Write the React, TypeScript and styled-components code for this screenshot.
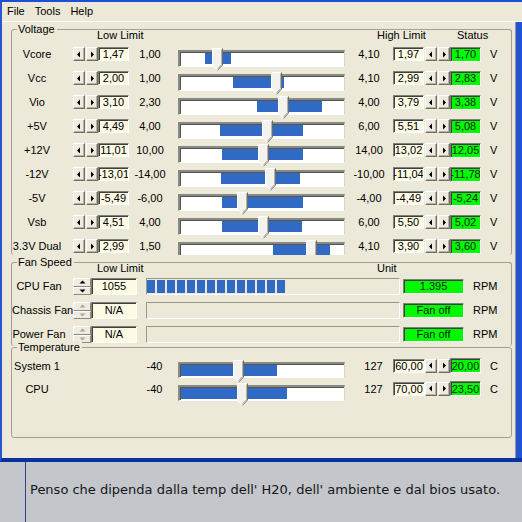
import React from 'react';
import styled, { createGlobalStyle } from 'styled-components';

const GlobalStyle = createGlobalStyle`
  html, body { margin: 0; padding: 0; }
  body {
    background: #C3C6CA;
    font-family: "Liberation Sans", Arial, sans-serif;
    font-size: 11px;
    color: #000;
    overflow: hidden;
  }
`;

const Page = styled.div`
  width: 522px;
  height: 522px;
  display: flex;
  flex-direction: column;
  background: #C3C6CA;
  overflow: hidden;
`;

const Window = styled.div`
  height: 462px;
  box-sizing: border-box;
  background: #ECE9D8;
  border-top: 2px solid #1A4FD6;
  border-left: 2px solid #2656D2;
  border-bottom: 4px solid #0B31A0;
  display: flex;
  flex-direction: column;
`;

const MenuBar = styled.div`
  height: 19px;
  display: flex;
  align-items: center;
  border-bottom: 1px solid #fff;
  font-size: 11px;
`;

const MenuItem = styled.span`
  padding: 0 5px;
  line-height: 19px;
`;

const Client = styled.div`
  flex: 1;
  min-height: 0;
  display: flex;
  flex-direction: column;
  padding: 0 4px 0 9px;
  border-right: 6px solid #2152D0;
  box-shadow: inset -1px 0 0 #8C97B8;
`;

const GroupBox = styled.div<{ $top: number; $open?: boolean; $pt?: number; $pb?: number }>`
  position: relative;
  margin-top: ${p => p.$top}px;
  border: 1px solid #A3A091;
  border-bottom: ${p => (p.$open ? 'none' : '1px solid #A3A091')};
  border-radius: 3px;
  padding-top: ${p => p.$pt ?? 0}px;
  padding-bottom: ${p => p.$pb ?? 0}px;
`;

const Caption = styled.span`
  position: absolute;
  top: -7px;
  left: 5px;
  padding: 0 2px 0 1px;
  background: #ECE9D8;
  line-height: 13px;
`;

const HeaderRow = styled.div<{ $h: number }>`
  display: grid;
  grid-template-columns: 85px 280px 80px 1fr;
  height: ${p => p.$h}px;
  line-height: ${p => p.$h}px;
  align-items: center;
  white-space: nowrap;
`;

const HeaderText = styled.span<{ $col: number }>`
  grid-column: ${p => p.$col};
`;

const RowsClip = styled.div<{ $h: number }>`
  height: ${p => p.$h}px;
  overflow: hidden;
`;

const Row = styled.div<{ $h: number }>`
  display: grid;
  grid-template-columns: 50px 11px 25px 31px 42px 7px 167px 48px 31px 1px 25px 31px 9px 1fr;
  height: ${p => p.$h}px;
  align-items: center;
`;

const Label = styled.span<{ $col?: string }>`
  grid-column: ${p => p.$col ?? '1'};
  text-align: center;
  white-space: nowrap;
`;

const Num = styled.span<{ $col: number; $nudge?: number }>`
  grid-column: ${p => p.$col};
  text-align: center;
  padding-left: ${p => p.$nudge ?? 0}px;
  white-space: nowrap;
`;

const Unit = styled.span<{ $col: number }>`
  grid-column: ${p => p.$col};
`;

const SpinPair = styled.div<{ $col: number }>`
  grid-column: ${p => p.$col};
  display: flex;
  gap: 1px;
  height: 14px;
`;

const ArrowBtn = styled.div`
  width: 12px;
  height: 14px;
  box-sizing: border-box;
  background: #EEEBE0;
  border: 1px solid;
  border-color: #fff #6F6D64 #6F6D64 #fff;
  box-shadow: inset -1px -1px 0 #B5B2A6;
  display: flex;
  align-items: center;
  justify-content: center;
`;

const Field = styled.div<{ $col: number; $w: number; $h: number }>`
  grid-column: ${p => p.$col};
  width: ${p => p.$w}px;
  height: ${p => p.$h}px;
  box-sizing: border-box;
  background: #FDFBE4;
  border: 1px solid;
  border-color: #7F7F7A #fff #fff #7F7F7A;
  box-shadow: inset 1px 1px 0 #404040;
  display: flex;
  align-items: center;
  justify-content: center;
  line-height: 12px;
  white-space: nowrap;
  overflow: hidden;
`;

const Status = styled(Field)`
  background: #00FA00;
  color: #0C1F0C;
`;

const Track = styled.div<{ $h: number }>`
  grid-column: 7;
  align-self: start;
  margin-top: 9px;
  position: relative;
  width: 167px;
  height: ${p => p.$h}px;
  box-sizing: border-box;
  background: #fff;
  border-style: solid;
  border-width: 2px 1px 1px 2px;
  border-color: #8A8A84 #D8D5C8 #fff #8A8A84;
  box-shadow: inset 1px 1px 0 #55554F;
`;

const Fill = styled.div`
  position: absolute;
  top: 1px;
  height: 11px;
  background: #316AC5;
`;

const ThumbWrap = styled.div`
  position: absolute;
  top: -4px;
  width: 11px;
  height: 23px;
`;

const Thumb = () => (
  <svg width="11" height="23" viewBox="0 0 11 23">
    <path d="M0.5 0.5 H10.5 V17 L5.5 22.3 L0.5 17 Z" fill="#F3F2EC" />
    <path d="M0.5 17 V0.5 H10" stroke="#fff" fill="none" />
    <path d="M10.5 0.5 V17 L5.5 22.3" stroke="#6D6C66" fill="none" />
    <path d="M9.5 1.5 V16.6 L5.5 20.8" stroke="#B4B2A8" fill="none" />
    <path d="M0.5 17 L5.2 21.8" stroke="#fff" fill="none" />
  </svg>
);

const LeftArrow = ({ color = '#000' }: { color?: string }) => (
  <svg width="4" height="7" viewBox="0 0 4 7">
    <path d="M3 0.5 V6.5 L0 3.5 Z" fill={color} />
  </svg>
);
const RightArrow = ({ color = '#000' }: { color?: string }) => (
  <svg width="4" height="7" viewBox="0 0 4 7">
    <path d="M1 0.5 V6.5 L4 3.5 Z" fill={color} />
  </svg>
);
const UpArrow = ({ color }: { color: string }) => (
  <svg width="7" height="4" viewBox="0 0 7 4">
    <path d="M0.5 3.5 H6.5 L3.5 0.5 Z" fill={color} />
  </svg>
);
const DownArrow = ({ color }: { color: string }) => (
  <svg width="7" height="4" viewBox="0 0 7 4">
    <path d="M0.5 0.5 H6.5 L3.5 3.5 Z" fill={color} />
  </svg>
);

const Spin = ({ col }: { col: number }) => (
  <SpinPair $col={col}>
    <ArrowBtn><LeftArrow /></ArrowBtn>
    <ArrowBtn><RightArrow /></ArrowBtn>
  </SpinPair>
);

const SPAN = 161;
const Slider = ({ from, to, at, h }: { from: number; to: number; at: number; h: number }) => (
  <Track $h={h}>
    <Fill style={{ left: 1 + from * SPAN, width: Math.max(0, (to - from) * SPAN) }} />
    <ThumbWrap style={{ left: 1 + at * SPAN - 5.5 }}>
      <Thumb />
    </ThumbWrap>
  </Track>
);

/* ---------- Fan ---------- */

const FanRowGrid = styled.div`
  display: grid;
  grid-template-columns: 54px 7px 18px 46px 9px 254px 3px 61px 9px 1fr;
  height: 24px;
  align-items: center;
`;

const UpDown = styled.div`
  grid-column: 3;
  display: flex;
  flex-direction: column;
  width: 18px;
  height: 17px;
`;

const UpDownBtn = styled.div<{ $h: number }>`
  height: ${p => p.$h}px;
  box-sizing: border-box;
  background: #EEEBE0;
  border: 1px solid;
  border-color: #fff #8C8A80 #8C8A80 #fff;
  display: flex;
  align-items: center;
  justify-content: center;
`;

const Progress = styled.div`
  grid-column: 6;
  height: 17px;
  box-sizing: border-box;
  border: 1px solid;
  border-color: #9A988C #fff #fff #9A988C;
  padding: 1px 0;
  display: flex;
  gap: 2px;
`;

const Block = styled.div`
  width: 8px;
  height: 13px;
  background: #316AC5;
`;

const Forum = styled.div`
  flex: 1;
  display: grid;
  grid-template-columns: 25px 1px 1fr;
`;

const ForumLine = styled.div`
  grid-column: 2;
  background: #3B3D84;
`;

const ForumText = styled.p`
  grid-column: 3;
  margin: 0;
  padding: 20px 0 0 4px;
  font-family: "DejaVu Sans", Verdana, sans-serif;
  font-size: 13px;
  line-height: 15px;
  color: #161616;
  white-space: nowrap;
`;

/* ---------- Data ---------- */

type V = { label: string; min: number; max: number; lo: number; hi: number; v: number };
const volts: V[] = [
  { label: 'Vcore', min: 1.0, max: 4.1, lo: 1.47, hi: 1.97, v: 1.7 },
  { label: 'Vcc', min: 1.0, max: 4.1, lo: 2.0, hi: 2.99, v: 2.83 },
  { label: 'Vio', min: 2.3, max: 4.0, lo: 3.1, hi: 3.79, v: 3.38 },
  { label: '+5V', min: 4.0, max: 6.0, lo: 4.49, hi: 5.51, v: 5.08 },
  { label: '+12V', min: 10.0, max: 14.0, lo: 11.01, hi: 13.02, v: 12.05 },
  { label: '-12V', min: -14.0, max: -10.0, lo: -13.01, hi: -11.04, v: -11.78 },
  { label: '-5V', min: -6.0, max: -4.0, lo: -5.49, hi: -4.49, v: -5.24 },
  { label: 'Vsb', min: 4.0, max: 6.0, lo: 4.51, hi: 5.5, v: 5.02 },
  { label: '3.3V Dual', min: 1.5, max: 4.1, lo: 2.99, hi: 3.9, v: 3.6 },
];

const fmt = (n: number) => n.toFixed(2).replace('.', ',');

const fans = [
  { label: 'CPU Fan', value: '1055', status: '1.395', on: true },
  { label: 'Chassis Fan', value: 'N/A', status: 'Fan off', on: false },
  { label: 'Power Fan', value: 'N/A', status: 'Fan off', on: false },
];

const temps = [
  { label: 'System 1', hi: 60, v: 20 },
  { label: 'CPU', hi: 70, v: 23.5 },
];

export default function App() {
  return (
    <Page>
      <GlobalStyle />
      <Window>
        <MenuBar>
          <MenuItem>File</MenuItem>
          <MenuItem>Tools</MenuItem>
          <MenuItem>Help</MenuItem>
        </MenuBar>
        <Client>
          <GroupBox $top={7} $open>
            <Caption>Voltage</Caption>
            <HeaderRow $h={11}>
              <HeaderText $col={2}>Low Limit</HeaderText>
              <HeaderText $col={3}>High Limit</HeaderText>
              <HeaderText $col={4}>Status</HeaderText>
            </HeaderRow>
            <RowsClip $h={214}>
              {volts.map(r => {
                const f = (x: number) => (x - r.min) / (r.max - r.min);
                return (
                  <Row $h={24} key={r.label}>
                    <Label>{r.label}</Label>
                    <Spin col={3} />
                    <Field $col={4} $w={31} $h={14}>{fmt(r.lo)}</Field>
                    <Num $col={5}>{fmt(r.min)}</Num>
                    <Slider from={f(r.lo)} to={f(r.hi)} at={f(r.v)} h={17} />
                    <Num $col={8}>{fmt(r.max)}</Num>
                    <Field $col={9} $w={31} $h={14}>{fmt(r.hi)}</Field>
                    <Spin col={11} />
                    <Status $col={12} $w={31} $h={15}>{fmt(r.v)}</Status>
                    <Unit $col={14}>V</Unit>
                  </Row>
                );
              })}
            </RowsClip>
          </GroupBox>

          <GroupBox $top={7} $open>
            <Caption>Fan Speed</Caption>
            <HeaderRow $h={11}>
              <HeaderText $col={2}>Low Limit</HeaderText>
              <HeaderText $col={3}>Unit</HeaderText>
            </HeaderRow>
            {fans.map(fan => {
              const c = fan.on ? '#000' : '#ACA899';
              return (
                <FanRowGrid key={fan.label}>
                  <Label>{fan.label}</Label>
                  <UpDown>
                    <UpDownBtn $h={9}><UpArrow color={c} /></UpDownBtn>
                    <UpDownBtn $h={8}><DownArrow color={c} /></UpDownBtn>
                  </UpDown>
                  <Field $col={4} $w={46} $h={17}>{fan.value}</Field>
                  <Progress>
                    {fan.on && Array.from({ length: 14 }, (_, i) => <Block key={i} />)}
                  </Progress>
                  <Status $col={8} $w={61} $h={15}>{fan.status}</Status>
                  <Unit $col={10}>RPM</Unit>
                </FanRowGrid>
              );
            })}
          </GroupBox>

          <GroupBox $top={1} $pt={5} $pb={38}>
            <Caption>Temperature</Caption>
            {temps.map(t => {
              const f = (x: number) => (x + 40) / 167;
              return (
                <Row $h={23} key={t.label}>
                  <Label>{t.label}</Label>
                  <Num $col={5} $nudge={9}>-40</Num>
                  <Slider from={0} to={f(t.hi)} at={f(t.v)} h={16} />
                  <Num $col={8} $nudge={9}>127</Num>
                  <Field $col={9} $w={32} $h={14}>{fmt(t.hi)}</Field>
                  <Spin col={11} />
                  <Status $col={12} $w={31} $h={15}>{fmt(t.v)}</Status>
                  <Unit $col={14}>C</Unit>
                </Row>
              );
            })}
          </GroupBox>
        </Client>
      </Window>
      <Forum>
        <ForumLine />
        <ForumText>Penso che dipenda dalla temp dell' H20, dell' ambiente e dal bios usato.</ForumText>
      </Forum>
    </Page>
  );
}
